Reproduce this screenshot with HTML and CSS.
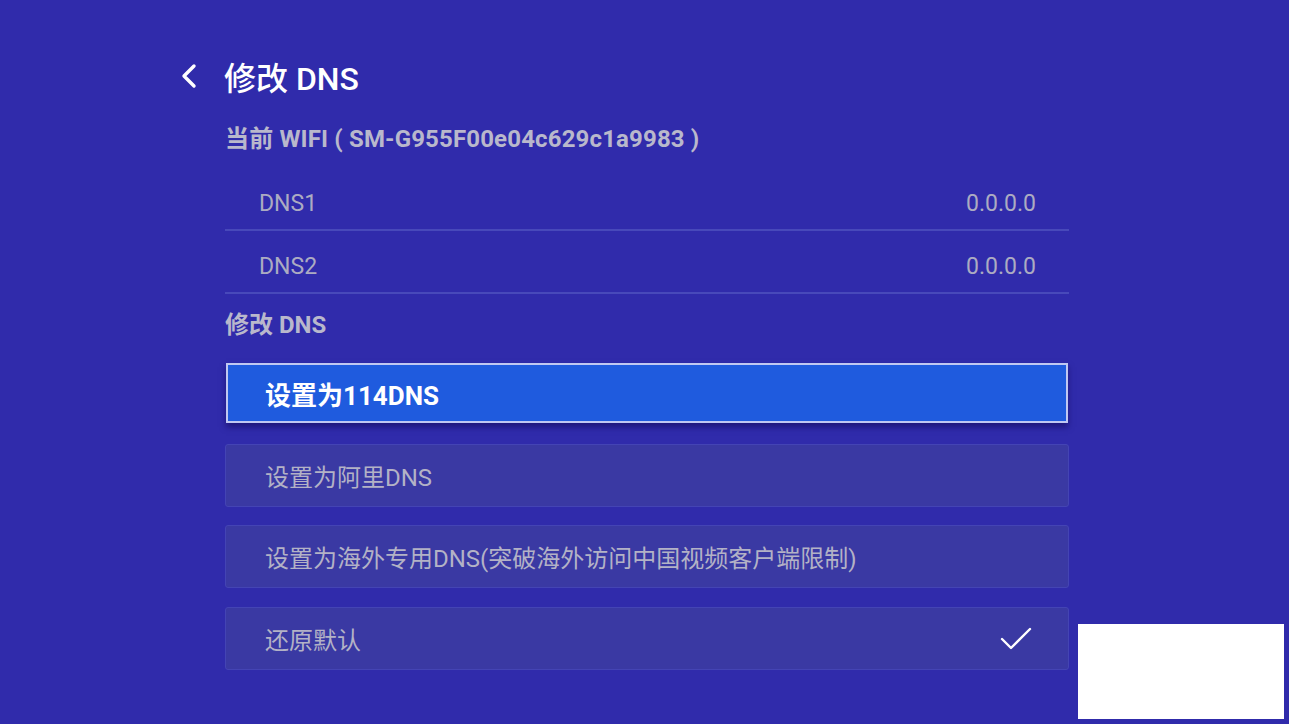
FILE: index.html
```html
<!DOCTYPE html>
<html lang="zh-CN">
<head>
    <meta charset="UTF-8">
    <title>修改 DNS</title>
    <link rel="stylesheet" href="styles.css">
</head>
<body>
    <div class="page">
        <div class="header">
            <span class="back">
                <svg width="18" height="26" viewBox="0 0 18 26"><path d="M14 3 L4 13 L14 23" fill="none" stroke="#fff" stroke-width="3.4" stroke-linecap="round" stroke-linejoin="round"/></svg>
            </span>
            <h1 class="title">修改 DNS</h1>
        </div>
        <div class="content">
            <div class="section-label wifi">当前 WIFI ( SM-G955F00e04c629c1a9983 )</div>
            <div class="dns-row">
                <span>DNS1</span>
                <span>0.0.0.0</span>
            </div>
            <div class="dns-row">
                <span>DNS2</span>
                <span>0.0.0.0</span>
            </div>
            <div class="section-label edit">修改 DNS</div>
            <div class="options">
                <div class="option selected">设置为114DNS</div>
                <div class="option">设置为阿里DNS</div>
                <div class="option">设置为海外专用DNS(突破海外访问中国视频客户端限制)</div>
                <div class="option last">
                    <span>还原默认</span>
                    <svg class="check" width="32" height="24" viewBox="0 0 32 24"><path d="M2 12 L11 21 L30 2" fill="none" stroke="#fff" stroke-width="2.4" stroke-linecap="round" stroke-linejoin="round"/></svg>
                </div>
            </div>
        </div>
    </div>
    <div class="overlay"></div>
</body>
</html>
```
FILE: styles.css
```css
body {
    margin: 0;
    height: 724px;
    overflow: hidden;
    background-color: #302bab;
    font-family: Roboto, "Noto Sans CJK SC", sans-serif;
}
.page {
    padding: 48px 0 0 176px;
}
.header {
    display: flex;
    align-items: center;
    height: 56px;
}
.back {
    width: 48px;
    display: flex;
    align-items: center;
    padding-left: 4px;
    box-sizing: border-box;
}
.back svg {
    display: block;
}
.title {
    margin: 0;
    color: #fff;
    font-size: 32px;
    font-weight: 500;
}
.content {
    margin-left: 49px;
    width: 844px;
}
.section-label {
    color: #b9b8cc;
    font-size: 24px;
    font-weight: 700;
}
.wifi {
    height: 40px;
    line-height: 40px;
    margin-top: 15px;
    margin-bottom: 9px;
    letter-spacing: 0.15px;
}
.edit {
    height: 36px;
    line-height: 36px;
    margin-top: 13px;
    margin-bottom: 20px;
}
.dns-row {
    display: flex;
    justify-content: space-between;
    align-items: center;
    height: 63px;
    box-sizing: border-box;
    padding: 10px 33px 0 34px;
    border-bottom: 2px solid #4849ba;
    color: #acabc2;
    font-size: 23px;
}
.options {
    display: flex;
    flex-direction: column;
    gap: 18px;
}
.option {
    display: flex;
    justify-content: space-between;
    align-items: center;
    height: 63px;
    box-sizing: border-box;
    padding: 0 36px 0 39px;
    background-color: #3a39a3;
    border: 1px solid #4444b4;
    border-radius: 3px;
    color: #b3b2c6;
    font-size: 24px;
}
.option.last {
    margin-top: 1px;
}
.option.selected {
    margin: 0 1px 3px;
    height: 60px;
    padding-left: 37px;
    background-color: #1f5bde;
    border: 2px solid #c0c8f2;
    border-radius: 0;
    color: #fff;
    font-size: 26px;
    font-weight: 700;
    box-shadow: 0 4px 6px rgba(20, 10, 90, 0.6);
}
.check {
    display: block;
}
.overlay {
    position: absolute;
    left: 1078px;
    top: 624px;
    width: 206px;
    height: 95px;
    background-color: #fff;
}
```
